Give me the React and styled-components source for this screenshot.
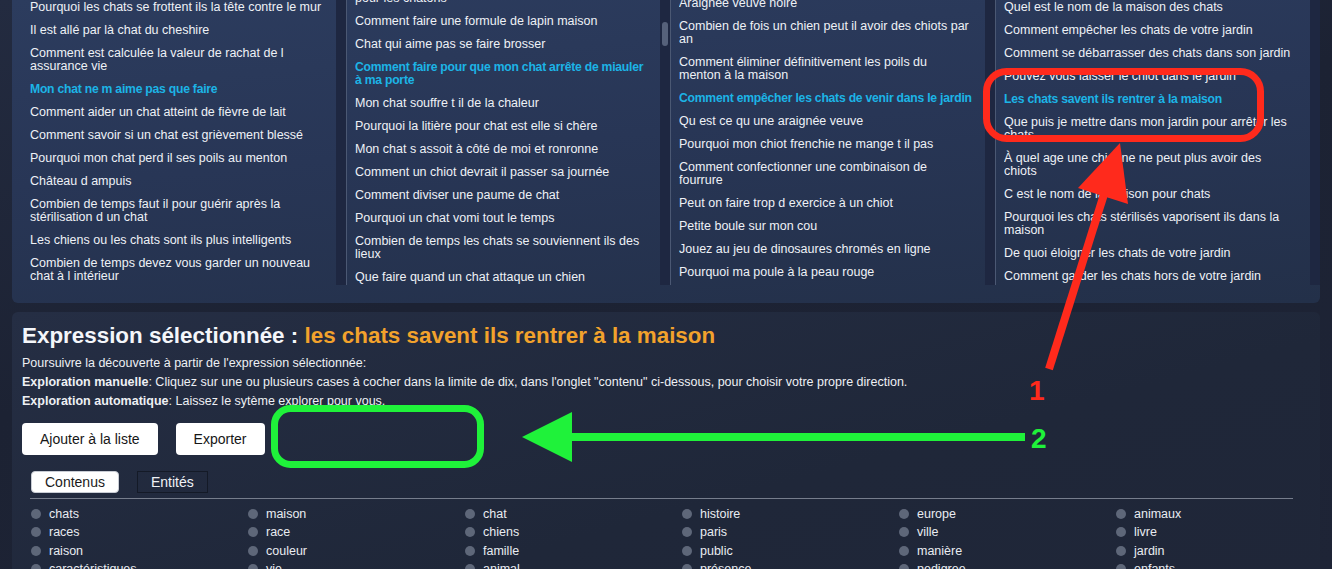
import React from 'react';
import styled, { createGlobalStyle } from 'styled-components';

const GlobalStyle = createGlobalStyle`
  html, body {
    margin: 0;
    padding: 0;
  }
  body {
    background: #1c2232;
    font-family: "Liberation Sans", Arial, Helvetica, sans-serif;
    overflow: hidden;
  }
`;

const columns = [
  {
    offset: -4,
    items: [
      'Pourquoi les chats se frottent ils la tête contre le mur',
      'Il est allé par là chat du cheshire',
      'Comment est calculée la valeur de rachat de l\nassurance vie',
      { text: 'Mon chat ne m aime pas que faire', active: true },
      'Comment aider un chat atteint de fièvre de lait',
      'Comment savoir si un chat est grièvement blessé',
      'Pourquoi mon chat perd il ses poils au menton',
      'Château d ampuis',
      'Combien de temps faut il pour guérir après la\nstérilisation d un chat',
      'Les chiens ou les chats sont ils plus intelligents',
      'Combien de temps devez vous garder un nouveau\nchat à l intérieur',
      'Comment nettoyer les oreilles d un chat'
    ]
  },
  {
    offset: -26,
    thumb: { top: 22, height: 24 },
    items: [
      'Quelle est la meilleure nourriture\npour les chatons',
      'Comment faire une formule de lapin maison',
      'Chat qui aime pas se faire brosser',
      { text: 'Comment faire pour que mon chat arrête de miauler\nà ma porte', active: true },
      'Mon chat souffre t il de la chaleur',
      'Pourquoi la litière pour chat est elle si chère',
      'Mon chat s assoit à côté de moi et ronronne',
      'Comment un chiot devrait il passer sa journée',
      'Comment diviser une paume de chat',
      'Pourquoi un chat vomi tout le temps',
      'Combien de temps les chats se souviennent ils des\nlieux',
      'Que faire quand un chat attaque un chien'
    ]
  },
  {
    offset: -8,
    items: [
      'Araignée veuve noire',
      'Combien de fois un chien peut il avoir des chiots par\nan',
      'Comment éliminer définitivement les poils du\nmenton à la maison',
      { text: 'Comment empêcher les chats de venir dans le jardin', active: true },
      'Qu est ce qu une araignée veuve',
      'Pourquoi mon chiot frenchie ne mange t il pas',
      'Comment confectionner une combinaison de\nfourrure',
      'Peut on faire trop d exercice à un chiot',
      'Petite boule sur mon cou',
      'Jouez au jeu de dinosaures chromés en ligne',
      'Pourquoi ma poule à la peau rouge',
      'Comment apprendre la propreté à un chaton'
    ]
  },
  {
    offset: -4,
    items: [
      'Quel est le nom de la maison des chats',
      'Comment empêcher les chats de votre jardin',
      'Comment se débarrasser des chats dans son jardin',
      'Pouvez vous laisser le chiot dans le jardin',
      { text: 'Les chats savent ils rentrer à la maison', active: true },
      'Que puis je mettre dans mon jardin pour arrêter les\nchats',
      'À quel age une chienne ne peut plus avoir des\nchiots',
      'C est le nom de la maison pour chats',
      'Pourquoi les chats stérilisés vaporisent ils dans la\nmaison',
      'De quoi éloigner les chats de votre jardin',
      'Comment garder les chats hors de votre jardin'
    ]
  }
];

const terms = [
  'chats', 'maison', 'chat', 'histoire', 'europe', 'animaux',
  'races', 'race', 'chiens', 'paris', 'ville', 'livre',
  'raison', 'couleur', 'famille', 'public', 'manière', 'jardin',
  'caractéristiques', 'vie', 'animal', 'présence', 'pedigree', 'enfants'
];

const Page = styled.div`
  position: relative;
  width: 1332px;
  height: 569px;
  overflow: hidden;
  box-sizing: border-box;
  padding: 0 12px;
  background: linear-gradient(165deg, #232b40 0%, #1c2233 45%, #1e2436 100%);
`;

const ResultsPanel = styled.section`
  display: grid;
  grid-template-columns: 334px 324px 325px 325px;
  padding-bottom: 18px;
  border-radius: 0 0 6px 6px;
  background: linear-gradient(175deg, #2c3c5e 0%, #283656 45%, #233049 100%);
`;

const Column = styled.div`
  display: flex;
  align-items: flex-start;
  height: 285px;
  overflow: hidden;
  padding-left: ${p => (p.$first ? '18px' : '8px')};
  border-left: ${p => (p.$first ? 'none' : '1px solid #4b5873')};
`;

const List = styled.ul`
  flex: 1;
  min-width: 0;
  margin: ${p => p.$offset}px 0 0;
  padding: 0;
  list-style: none;
`;

const Item = styled.li`
  padding: 5px 0;
  font-size: ${p => (p.$active ? '12.2px' : '12.5px')};
  letter-spacing: ${p => (p.$active ? '-0.24px' : '0')};
  line-height: 13px;
  white-space: pre;
  overflow: hidden;
  color: ${p => (p.$active ? '#1cb4e6' : '#eef1f6')};
  font-weight: ${p => (p.$active ? 700 : 400)};
`;

const Track = styled.div`
  flex: none;
  align-self: stretch;
  width: 10px;
  display: flex;
  justify-content: center;
  background: #1e2741;
`;

const Thumb = styled.div`
  width: 6px;
  height: ${p => p.$height}px;
  margin-top: ${p => p.$top}px;
  border-radius: 3px;
  background: #56617a;
`;

const DetailPanel = styled.section`
  height: 270px;
  margin-top: 9px;
  padding: 11px 10px 0;
  border-radius: 6px 6px 0 0;
  background: linear-gradient(165deg, #252e44 0%, #1f2739 60%, #1f2638 100%);
  color: #eef0f4;
`;

const Title = styled.h2`
  margin: 0;
  font-size: 22.4px;
  line-height: 26px;
  font-weight: 700;
  color: #f4f6fa;
`;

const Selected = styled.span`
  color: #f2a22c;
`;

const Intro = styled.div`
  margin-top: 5px;
  font-size: 12.5px;
  line-height: 19px;

  b {
    font-weight: 700;
  }
`;

const Actions = styled.div`
  display: flex;
  gap: 18px;
  margin-top: 12px;
`;

const Button = styled.button`
  height: 32px;
  padding: 0 18px;
  border: none;
  border-radius: 4px;
  background: #ffffff;
  color: #161616;
  font-family: inherit;
  font-size: 14px;
`;

const TabBar = styled.div`
  display: flex;
  gap: 18px;
  margin: 16px 17px 0 8px;
  padding: 0 0 5px 1px;
  border-bottom: 1px solid #767d8c;
`;

const Tab = styled.div`
  height: 22px;
  box-sizing: border-box;
  padding: 0 13px;
  display: flex;
  align-items: center;
  font-size: 14px;
  border-radius: ${p => (p.$active ? '4px' : '0')};
  background: ${p => (p.$active ? '#ffffff' : 'transparent')};
  color: ${p => (p.$active ? '#1a1a1a' : '#f0f2f6')};
  border: 1px solid ${p => (p.$active ? '#c8ccd4' : '#141a27')};
`;

const TermGrid = styled.div`
  display: grid;
  grid-template-columns: repeat(6, 217px);
  grid-auto-rows: 18.3px;
  margin: 6px 0 0 9px;
`;

const Term = styled.label`
  display: flex;
  align-items: center;
  font-size: 12.5px;
  color: #e9ecf1;
`;

const Dot = styled.span`
  width: 10px;
  height: 10px;
  margin-right: 8px;
  border-radius: 50%;
  background: #5e6779;
`;

const Overlay = styled.svg`
  position: absolute;
  left: 0;
  top: 0;
  pointer-events: none;
`;

const Label = styled.text`
  font-family: "Liberation Sans", Arial, sans-serif;
  font-weight: 700;
  font-size: 28px;
`;

function Annotations() {
  const red = '#ff2a1c';
  const green = '#1ff23a';
  return (
    <Overlay width="1332" height="569" viewBox="0 0 1332 569">
      <rect x="986.5" y="71.5" width="274" height="67" rx="20" fill="none" stroke={red} strokeWidth="7" />
      <line x1="1049" y1="369" x2="1106" y2="188" stroke={red} strokeWidth="8" />
      <polygon points="1120,143 1078,188 1128,204" fill={red} />
      <Label x="1029" y="400" fill={red}>1</Label>

      <rect x="274.5" y="408.5" width="206" height="56" rx="16" fill="none" stroke={green} strokeWidth="7" />
      <line x1="566" y1="437" x2="1025" y2="437" stroke={green} strokeWidth="8" />
      <polygon points="522,437 572,412 572,462" fill={green} />
      <Label x="1031" y="448" fill={green}>2</Label>
    </Overlay>
  );
}

export default function App() {
  return (
    <>
      <GlobalStyle />
      <Page>
        <ResultsPanel>
          {columns.map((col, i) => (
            <Column key={i} $first={i === 0}>
              <List $offset={col.offset}>
                {col.items.map((item, j) => {
                  const text = typeof item === 'string' ? item : item.text;
                  return (
                    <Item key={j} $active={typeof item !== 'string'}>
                      {text}
                    </Item>
                  );
                })}
              </List>
              <Track>
                {col.thumb && <Thumb $top={col.thumb.top} $height={col.thumb.height} />}
              </Track>
            </Column>
          ))}
        </ResultsPanel>

        <DetailPanel>
          <Title>
            Expression sélectionnée : <Selected>les chats savent ils rentrer à la maison</Selected>
          </Title>
          <Intro>
            <div>Poursuivre la découverte à partir de l'expression sélectionnée:</div>
            <div>
              <b>Exploration manuelle</b>: Cliquez sur une ou plusieurs cases à cocher dans la limite de dix, dans
              l'onglet "contenu" ci-dessous, pour choisir votre propre direction.
            </div>
            <div>
              <b>Exploration automatique</b>: Laissez le sytème explorer pour vous.
            </div>
          </Intro>
          <Actions>
            <Button>Ajouter à la liste</Button>
            <Button>Exporter</Button>
          </Actions>
          <TabBar>
            <Tab $active>Contenus</Tab>
            <Tab>Entités</Tab>
          </TabBar>
          <TermGrid>
            {terms.map(t => (
              <Term key={t}>
                <Dot />
                {t}
              </Term>
            ))}
          </TermGrid>
        </DetailPanel>

        <Annotations />
      </Page>
    </>
  );
}
